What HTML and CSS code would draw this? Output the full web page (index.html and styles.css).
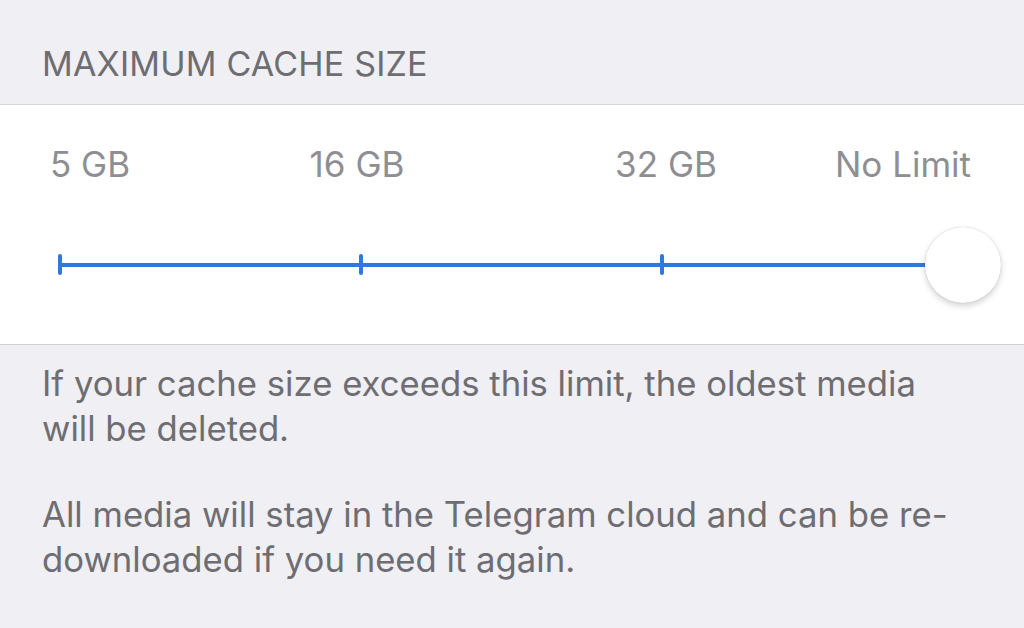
FILE: index.html
```html
<!DOCTYPE html>
<html>
<head>
<meta charset="utf-8">
<link rel="stylesheet" href="styles.css">
</head>
<body>
<div class="page">
  <div class="section-header">MAXIMUM CACHE SIZE</div>
  <div class="card">
    <div class="labels">
      <span class="lbl lbl-first">5 GB</span>
      <span class="lbl">16 GB</span>
      <span class="lbl">32 GB</span>
      <span class="lbl lbl-last">No Limit</span>
    </div>
    <div class="slider">
      <div class="track">
        <span class="tick"></span>
        <span class="tick"></span>
        <span class="tick"></span>
        <span class="tick"></span>
        <span class="thumb"></span>
      </div>
    </div>
  </div>
  <div class="footer">
    <p>If your cache size exceeds this limit, the oldest media will be deleted.</p>
    <p>All media will stay in the Telegram cloud and can be re-downloaded if you need it again.</p>
  </div>
</div>
</body>
</html>
```
FILE: styles.css
```css
* { box-sizing: border-box; }
html, body {
  margin: 0;
  padding: 0;
  background: #efeff4;
  font-family: Inter, "Noto Sans", sans-serif;
}
.page {
  width: 1024px;
  height: 628px;
  overflow: hidden;
  background: #efeff4;
}
.section-header {
  height: 104px;
  padding: 44px 0 0 42px;
  font-size: 34px;
  line-height: 40px;
  color: #6d6d72;
  letter-spacing: 0.2px;
}
.card {
  background: #fff;
  border-top: 1px solid #d8d8dc;
  border-bottom: 1px solid #d0d0d4;
  height: 241px;
}
.labels {
  display: grid;
  grid-template-columns: 153px 308px 310px 1fr;
  padding: 39px 53px 0 50px;
  font-size: 35px;
  line-height: 40px;
  color: #8e8e93;
}
.lbl { text-align: center; white-space: nowrap; }
.lbl-first { text-align: left; }
.lbl-last { text-align: right; }
.slider {
  padding: 70px 0 0 58px;
}
.track {
  position: relative;
  width: 907px;
  height: 21px;
  display: flex;
  justify-content: space-between;
  align-items: center;
}
.track::before {
  content: "";
  position: absolute;
  left: 2px;
  right: 2px;
  top: 9px;
  height: 4px;
  background: #2f78dc;
}
.tick {
  position: relative;
  width: 4px;
  height: 21px;
  border-radius: 2px;
  background: #2f78dc;
}
.thumb {
  position: absolute;
  right: -36px;
  top: -27px;
  width: 76px;
  height: 76px;
  border-radius: 50%;
  background: #fff;
  box-shadow: 0 3px 6px rgba(0,0,0,0.18), 0 0 1px rgba(0,0,0,0.25);
}
.footer {
  padding: 16px 50px 0 42px;
  font-size: 34.7px;
  line-height: 45px;
  color: #6d6d72;
}
.footer p {
  margin: 0 0 41px 0;
}
```
